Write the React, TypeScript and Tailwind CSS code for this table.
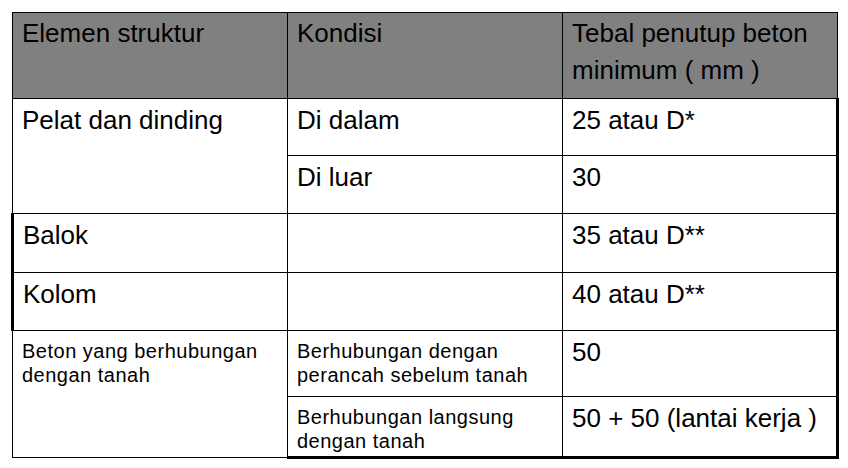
export default function App() {
  const big = 'text-[26px] leading-[37px] pl-[9px] pt-[2px] align-top text-black'
  const body = 'text-[26px] leading-[32px] pl-[9px] pt-[5px] align-top text-black'
  const small = 'text-[20px] leading-[24px] tracking-[0.5px] pl-[9px] pt-[8px] align-top text-black'
  const line = 'border border-black'

  return (
    <div className="w-[848px] h-[468px] bg-white pt-[12px] pl-[11px]" style={{ fontFamily: '"Liberation Sans", Arial, sans-serif' }}>
      <table className="table-fixed border-collapse w-[825px]">
        <colgroup>
          <col className="w-[275px]" />
          <col className="w-[275px]" />
          <col className="w-[275px]" />
        </colgroup>
        <tbody>
          <tr className="h-[86px] bg-[#808080]">
            <td className={`${big} ${line}`}>Elemen struktur</td>
            <td className={`${big} ${line}`}>Kondisi</td>
            <td className={`${big} ${line} pr-[12px]`}>Tebal penutup beton minimum ( mm )</td>
          </tr>
          <tr className="h-[57px]">
            <td rowSpan={2} className={`${body} ${line}`}>Pelat dan dinding</td>
            <td className={`${body} ${line}`}>Di dalam</td>
            <td className={`${body} ${line} border-r-[3px]`}>25 atau D*</td>
          </tr>
          <tr className="h-[58px]">
            <td className={`${body} ${line}`}>Di luar</td>
            <td className={`${body} ${line} border-r-[3px]`}>30</td>
          </tr>
          <tr className="h-[59px]">
            <td className={`${body} ${line} border-l-[3px]`}>Balok</td>
            <td className={`${body} ${line}`}></td>
            <td className={`${body} ${line} border-r-[3px]`}>35 atau D**</td>
          </tr>
          <tr className="h-[58px]">
            <td className={`${body} ${line} border-l-[3px]`}>Kolom</td>
            <td className={`${body} ${line}`}></td>
            <td className={`${body} ${line} border-r-[3px]`}>40 atau D**</td>
          </tr>
          <tr className="h-[66px]">
            <td rowSpan={2} className={`${small} ${line}`}>Beton yang berhubungan dengan tanah</td>
            <td className={`${small} ${line}`}>Berhubungan dengan perancah sebelum tanah</td>
            <td className={`${body} ${line} border-r-[3px]`}>50</td>
          </tr>
          <tr className="h-[61px]">
            <td className={`${small} ${line} border-b-[3px]`}>Berhubungan langsung dengan tanah</td>
            <td className={`${body} ${line} border-r-[3px] border-b-[3px]`}>50 + 50 (lantai kerja )</td>
          </tr>
        </tbody>
      </table>
    </div>
  )
}
